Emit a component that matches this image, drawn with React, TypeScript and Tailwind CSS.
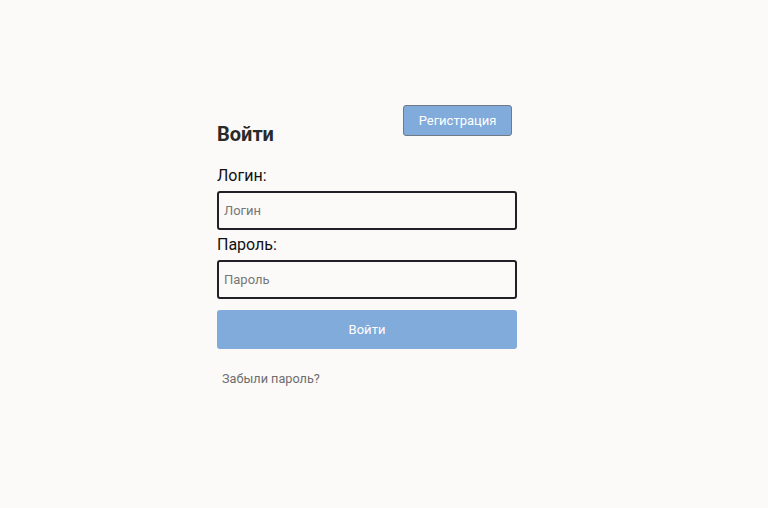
import React from "react";

export default function App() {
  return (
    <div
      className="min-h-screen w-full bg-[#fbfaf9] pt-[105px] pl-[217px]"
      style={{ fontFamily: "Roboto, 'Liberation Sans', sans-serif" }}
    >
      <div className="w-[300px]">
        <div className="flex items-start justify-between">
          <h1 className="mt-[15px] text-[20px] leading-[28px] font-bold text-[#2a2a2a]">Войти</h1>
          <button
            type="button"
            className="mr-[5px] h-[31px] w-[109px] rounded-[3px] border border-[#6f7a86] bg-[#80abda] text-[13px] text-white"
          >
            Регистрация
          </button>
        </div>
        <label className="mt-[16px] block text-[16px] leading-[24px] text-[#111]">Логин:</label>
        <input
          placeholder="Логин"
          className="mt-[3px] block h-[39px] w-[300px] rounded-[3px] border-2 border-[#1f2127] bg-[#fbfaf9] px-[5px] text-[13px] text-[#222] placeholder:text-[#767676] outline-none"
        />
        <label className="mt-[3px] block text-[16px] leading-[24px] text-[#111]">Пароль:</label>
        <input
          type="password"
          placeholder="Пароль"
          className="mt-[3px] block h-[39px] w-[300px] rounded-[3px] border-2 border-[#1f2127] bg-[#fbfaf9] px-[5px] text-[13px] text-[#222] placeholder:text-[#767676] outline-none"
        />
        <button
          type="button"
          className="mt-[11px] block h-[39px] w-[300px] rounded-[3px] bg-[#80abda] text-[13px] text-white"
        >
          Войти
        </button>
        <a className="mt-[21px] ml-[5px] block text-[12.7px] leading-[18px] text-[#6e6e6e]" href="#">
          Забыли пароль?
        </a>
      </div>
    </div>
  );
}
